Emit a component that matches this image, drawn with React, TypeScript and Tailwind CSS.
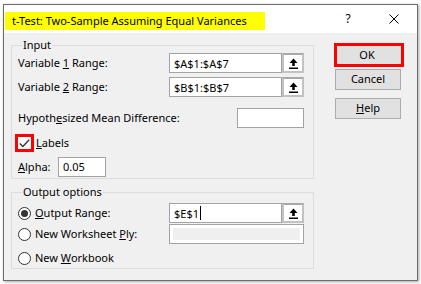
import React from "react";

const FONT = "font-['Noto_Sans','Open_Sans',sans-serif]";

function UpArrow() {
  return (
    <svg width="9" height="11" viewBox="0 0 9 11" className="block">
      <path d="M4.5 0.5 L0.5 5 H3.2 V8 H5.8 V5 H8.5 Z" fill="#000" />
      <rect x="0" y="9.5" width="9" height="1.5" fill="#000" />
    </svg>
  );
}

function RefButton() {
  return (
    <div className="flex h-[20px] w-[22px] items-center justify-center border-2 border-[#c2c2c2] border-t-[#a8a8a8] bg-white">
      <UpArrow />
    </div>
  );
}

function RangeBox({ value, cursor }: { value: string; cursor?: boolean }) {
  return (
    <div className="flex">
      <div className="flex h-[20px] w-[113px] items-center border border-[#a3a3a3] bg-white pl-[4px] leading-none">
        {value}
        {cursor && <span className="ml-[1px] inline-block h-[14px] w-px bg-black" />}
      </div>
      <RefButton />
    </div>
  );
}

function Radio({ checked }: { checked?: boolean }) {
  return (
    <span className="flex h-[13px] w-[13px] items-center justify-center rounded-full border border-[#333] bg-white">
      {checked && <span className="h-[7px] w-[7px] rounded-full bg-[#333]" />}
    </span>
  );
}

function Btn({ children, outlined }: { children: React.ReactNode; outlined?: boolean }) {
  return outlined ? (
    <div className="flex h-[24px] w-[70px] items-center justify-center border-[3px] border-[#ff0000] bg-[#e1e1e1] pr-[4px]">
      {children}
    </div>
  ) : (
    <div className="flex h-[21px] w-[66px] items-center justify-center border border-[#adadad] bg-[#e1e1e1]">
      {children}
    </div>
  );
}

export default function App() {
  return (
    <div className={`h-[284px] w-[421px] bg-white pl-[3px] pt-[4px] text-[11px] text-black ${FONT}`}>
      <div className="flex h-[277px] w-[415px] flex-col border border-[#6d6d6d] bg-[#f0f0f0] shadow-[1px_1px_3px_rgba(0,0,0,0.35)]">
        {/* title bar */}
        <div className="flex h-[28px] shrink-0 items-start bg-white">
          <div className="ml-[1px] mt-[7px] flex h-[18px] w-[260px] items-center whitespace-nowrap bg-[#ffff00] pl-[7px]">
            t-Test: Two-Sample Assuming Equal Variances
          </div>
          <div className="ml-auto flex h-[28px] w-[46px] items-center justify-center text-[12px]">?</div>
          <div className="flex h-[28px] w-[46px] items-center justify-center">
            <svg width="10" height="10" viewBox="0 0 10 10">
              <path d="M0.5 0.5 L9.5 9.5 M9.5 0.5 L0.5 9.5" stroke="#000" strokeWidth="1" />
            </svg>
          </div>
        </div>

        {/* body */}
        <div className="flex flex-1">
          <div className="ml-[7px] flex w-[303px] flex-col">
            <fieldset className="mt-[4px] border border-[#dcdcdc] pb-[1px] pl-[6px] pr-[9px]">
              <legend className="ml-[4px] px-[1px] leading-[16px]">Input</legend>
              <div className="flex h-[20px] items-center">
                <span className="w-[151px]">
                  Variable <u>1</u> Range:
                </span>
                <RangeBox value="$A$1:$A$7" />
              </div>
              <div className="mt-[4px] flex h-[20px] items-center">
                <span className="w-[151px]">
                  Variable <u>2</u> Range:
                </span>
                <RangeBox value="$B$1:$B$7" />
              </div>
              <div className="mt-[11px] flex h-[20px] items-center">
                <span>
                  Hypoth<u>e</u>sized Mean Difference:
                </span>
                <div className="ml-auto h-[20px] w-[67px] border border-[#a3a3a3] bg-white" />
              </div>
              <div className="ml-[-3px] mt-[6px] flex h-[18px] items-center">
                <div className="flex h-[18px] w-[19px] items-center justify-center border-[3px] border-[#ff0000] bg-white">
                  <svg width="11" height="9" viewBox="0 0 11 9">
                    <path d="M0.8 4.5 L3.8 7.5 L10.2 0.8" fill="none" stroke="#333" strokeWidth="1.4" />
                  </svg>
                </div>
                <span className="ml-[2px]">
                  <u>L</u>abels
                </span>
              </div>
              <div className="mt-[5px] flex h-[20px] items-center">
                <span className="w-[40px]">
                  <u>A</u>lpha:
                </span>
                <div className="flex h-[20px] w-[48px] items-center border border-[#a3a3a3] bg-white pl-[4px]">0.05</div>
              </div>
            </fieldset>

            <fieldset className="mt-[5px] border border-[#dcdcdc] pl-[6px] pr-[9px]">
              <legend className="ml-[4px] px-[1px] leading-[16px]">Output options</legend>
              <div className="mt-[3px] flex h-[20px] items-center">
                <div className="flex w-[151px] items-center gap-[4px]">
                  <Radio checked />
                  <span>
                    <u>O</u>utput Range:
                  </span>
                </div>
                <RangeBox value="$E$1" cursor />
              </div>
              <div className="mt-[1px] flex h-[20px] items-center">
                <div className="flex w-[151px] items-center gap-[4px]">
                  <Radio />
                  <span>
                    New Worksheet <u>P</u>ly:
                  </span>
                </div>
                <div className="h-[20px] w-[135px] border border-[#a3a3a3] bg-white p-[3px]">
                  <div className="h-full w-full bg-[#efefef]" />
                </div>
              </div>
              <div className="mt-[4px] flex h-[20px] items-center gap-[4px]">
                <Radio />
                <span>
                  New <u>W</u>orkbook
                </span>
              </div>
            </fieldset>
          </div>

          <div className="ml-[20px] mt-[10px] flex flex-col">
            <Btn outlined>OK</Btn>
            <div className="ml-[1px] mt-[2px]">
              <Btn>Cancel</Btn>
            </div>
            <div className="ml-[1px] mt-[8px]">
              <Btn>
                <span>
                  <u>H</u>elp
                </span>
              </Btn>
            </div>
          </div>
        </div>
      </div>
    </div>
  );
}
